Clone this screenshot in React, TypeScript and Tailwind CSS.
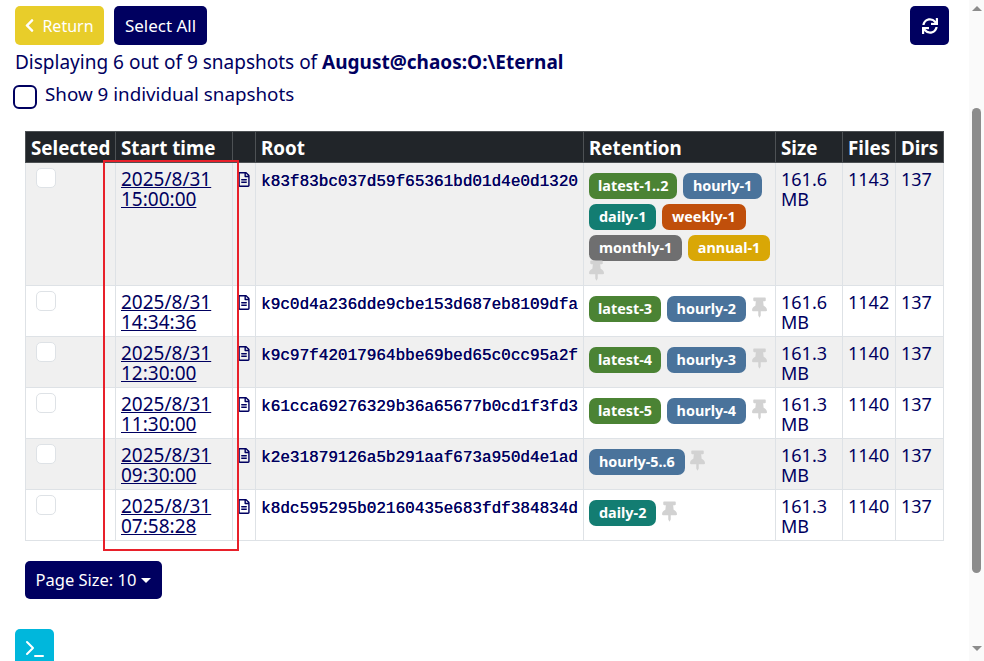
import { FaChevronLeft, FaRegFileAlt, FaSync, FaThumbtack } from "react-icons/fa";
import { Terminal } from "lucide-react";

type Tag = { label: string; color: string };

const green = "bg-[#4b8334] px-[9px]";
const blue = "bg-[#4a739b] px-[10px]";
const teal = "bg-[#137d72] px-[10px]";

const rows: { date: string; time: string; root: string; tags: Tag[]; size: string; files: string }[] = [
  {
    date: "2025/8/31",
    time: "15:00:00",
    root: "k83f83bc037d59f65361bd01d4e0d1320",
    tags: [
      { label: "latest-1..2", color: green },
      { label: "hourly-1", color: blue },
      { label: "daily-1", color: teal },
      { label: "weekly-1", color: "bg-[#c04f0b] px-[10px]" },
      { label: "monthly-1", color: "bg-[#6f6f70] px-[10px]" },
      { label: "annual-1", color: "bg-[#d9a706] px-[10px]" },
    ],
    size: "161.6",
    files: "1143",
  },
  {
    date: "2025/8/31",
    time: "14:34:36",
    root: "k9c0d4a236dde9cbe153d687eb8109dfa",
    tags: [
      { label: "latest-3", color: green },
      { label: "hourly-2", color: blue },
    ],
    size: "161.6",
    files: "1142",
  },
  {
    date: "2025/8/31",
    time: "12:30:00",
    root: "k9c97f42017964bbe69bed65c0cc95a2f",
    tags: [
      { label: "latest-4", color: green },
      { label: "hourly-3", color: blue },
    ],
    size: "161.3",
    files: "1140",
  },
  {
    date: "2025/8/31",
    time: "11:30:00",
    root: "k61cca69276329b36a65677b0cd1f3fd3",
    tags: [
      { label: "latest-5", color: green },
      { label: "hourly-4", color: blue },
    ],
    size: "161.3",
    files: "1140",
  },
  {
    date: "2025/8/31",
    time: "09:30:00",
    root: "k2e31879126a5b291aaf673a950d4e1ad",
    tags: [{ label: "hourly-5..6", color: blue }],
    size: "161.3",
    files: "1140",
  },
  {
    date: "2025/8/31",
    time: "07:58:28",
    root: "k8dc595295b02160435e683fdf384834d",
    tags: [{ label: "daily-2", color: teal }],
    size: "161.3",
    files: "1140",
  },
];

const th = "border border-[#4d5154] px-[5px] pt-[2px] h-[31px] text-left font-bold text-[18.8px] leading-[22px] text-white";
const td = "border border-[#dee2e6] px-[5px] pt-[6px] pb-[4px] align-top";

export default function App() {
  return (
    <div className="flex h-[661px] overflow-hidden bg-white text-[#000060] font-['Noto_Sans','Open_Sans',sans-serif] text-[18.8px] leading-[20px]">
      <main className="relative w-[969px]">
        <div className="flex items-center justify-between pl-[15px] pr-[20px] pt-[6px]">
          <div className="flex gap-[10px]">
            <button className="flex h-[39px] w-[89px] items-center justify-center gap-[5px] rounded-[5px] bg-[#e8cd2a] pr-[3px] text-[16px] text-white">
              <FaChevronLeft className="h-[15px] w-[15px]" />
              Return
            </button>
            <button className="h-[39px] w-[93px] rounded-[5px] bg-[#000060] text-[17px] text-white">Select All</button>
          </div>
          <button className="flex h-[39px] w-[39px] items-center justify-center rounded-[5px] bg-[#000060] text-white">
            <FaSync className="h-[16px] w-[16px]" />
          </button>
        </div>

        <p className="mt-[7px] pl-[15px] text-[19px] leading-[20px]">
          Displaying 6 out of 9 snapshots of <b>August@chaos:O:\Eternal</b>
        </p>

        <div className="mt-[12px] flex items-start pl-[13px]">
          <span className="mt-[1px] h-[24px] w-[24px] rounded-[6px] border-2 border-[#000060] bg-white" />
          <span className="ml-[8px]">Show 9 individual snapshots</span>
        </div>

        <table className="ml-[25px] mt-[22px] w-[918px] table-fixed border-collapse">
          <colgroup>
            <col className="w-[90px]" />
            <col className="w-[117px]" />
            <col className="w-[23px]" />
            <col className="w-[328px]" />
            <col className="w-[192px]" />
            <col className="w-[67px]" />
            <col className="w-[53px]" />
            <col className="w-[48px]" />
          </colgroup>
          <thead className="bg-[#212529]">
            <tr>
              <th className={th}>Selected</th>
              <th className={th}>Start time</th>
              <th className={th}></th>
              <th className={th}>Root</th>
              <th className={th}>Retention</th>
              <th className={th}>Size</th>
              <th className={th}>Files</th>
              <th className={th}>Dirs</th>
            </tr>
          </thead>
          <tbody className="text-[18px]">
            {rows.map((r, i) => (
              <tr key={r.root} className={i % 2 === 0 ? "bg-[#f0f0f0]" : "bg-white"}>
                <td className={td}>
                  <span className="-mt-[1px] ml-[5px] block h-[20px] w-[20px] rounded-[5px] border border-[#dee2e6] bg-white" />
                </td>
                <td className={td}>
                  <a href="#" className="text-[19px] underline">
                    {r.date}
                    <br />
                    {r.time}
                  </a>
                </td>
                <td className={td}>
                  <FaRegFileAlt className="mt-[3px] h-[15px] w-[12px]" />
                </td>
                <td className={td}>
                  <span className="block pt-[4px] whitespace-nowrap font-['Liberation_Mono',monospace] text-[16px] leading-[18px] [text-shadow:0.3px_0_0_#000060]">
                    {r.root}
                  </span>
                </td>
                <td className={td}>
                  <div className="-mr-[2px] flex flex-wrap items-start gap-x-[5.5px] gap-y-[5px] pt-[4px]">
                    {r.tags.map((t) => (
                      <span
                        key={t.label}
                        className={`${t.color} flex h-[26px] items-center rounded-[7px] text-[14.4px] font-bold text-white`}
                      >
                        {t.label}
                      </span>
                    ))}
                    <FaThumbtack
                      className={
                        i === 0
                          ? "-mt-[6px] h-[21px] w-[15px] text-[#d2d2d2]"
                          : "mt-[1px] h-[21px] w-[15px] text-[#d2d2d2]"
                      }
                    />
                  </div>
                </td>
                <td className={td}>
                  {r.size}
                  <br />
                  MB
                </td>
                <td className={td}>{r.files}</td>
                <td className={td}>137</td>
              </tr>
            ))}
          </tbody>
        </table>

        <button className="ml-[25px] mt-[20px] flex h-[38px] w-[137px] items-center justify-center gap-[5px] rounded-[5px] bg-[#000060] text-[16.5px] text-white">
          Page Size: 10
          <span className="h-0 w-0 border-x-[5px] border-t-[5px] border-x-transparent border-t-white" />
        </button>

        <button className="ml-[15px] mt-[30px] flex h-[39px] w-[39px] items-center justify-center rounded-[5px] bg-[#00b7dc] text-white">
          <Terminal className="h-[24px] w-[24px]" strokeWidth={2} />
        </button>

        <div className="absolute left-[103px] top-[160px] h-[391px] w-[136px] border-2 border-[#e8202a]" />
      </main>

      <aside className="flex w-[15px] flex-col items-center bg-[#fafafa]">
        <span className="mt-[6px] h-0 w-0 border-x-[5px] border-b-[5px] border-x-transparent border-b-[#8c8c8c]" />
        <span className="mt-[97px] h-[465px] w-[9px] rounded-[5px] bg-[#8c8c8c]" />
        <span className="mt-[73px] h-0 w-0 border-x-[5px] border-t-[5px] border-x-transparent border-t-[#8c8c8c]" />
      </aside>
    </div>
  );
}
